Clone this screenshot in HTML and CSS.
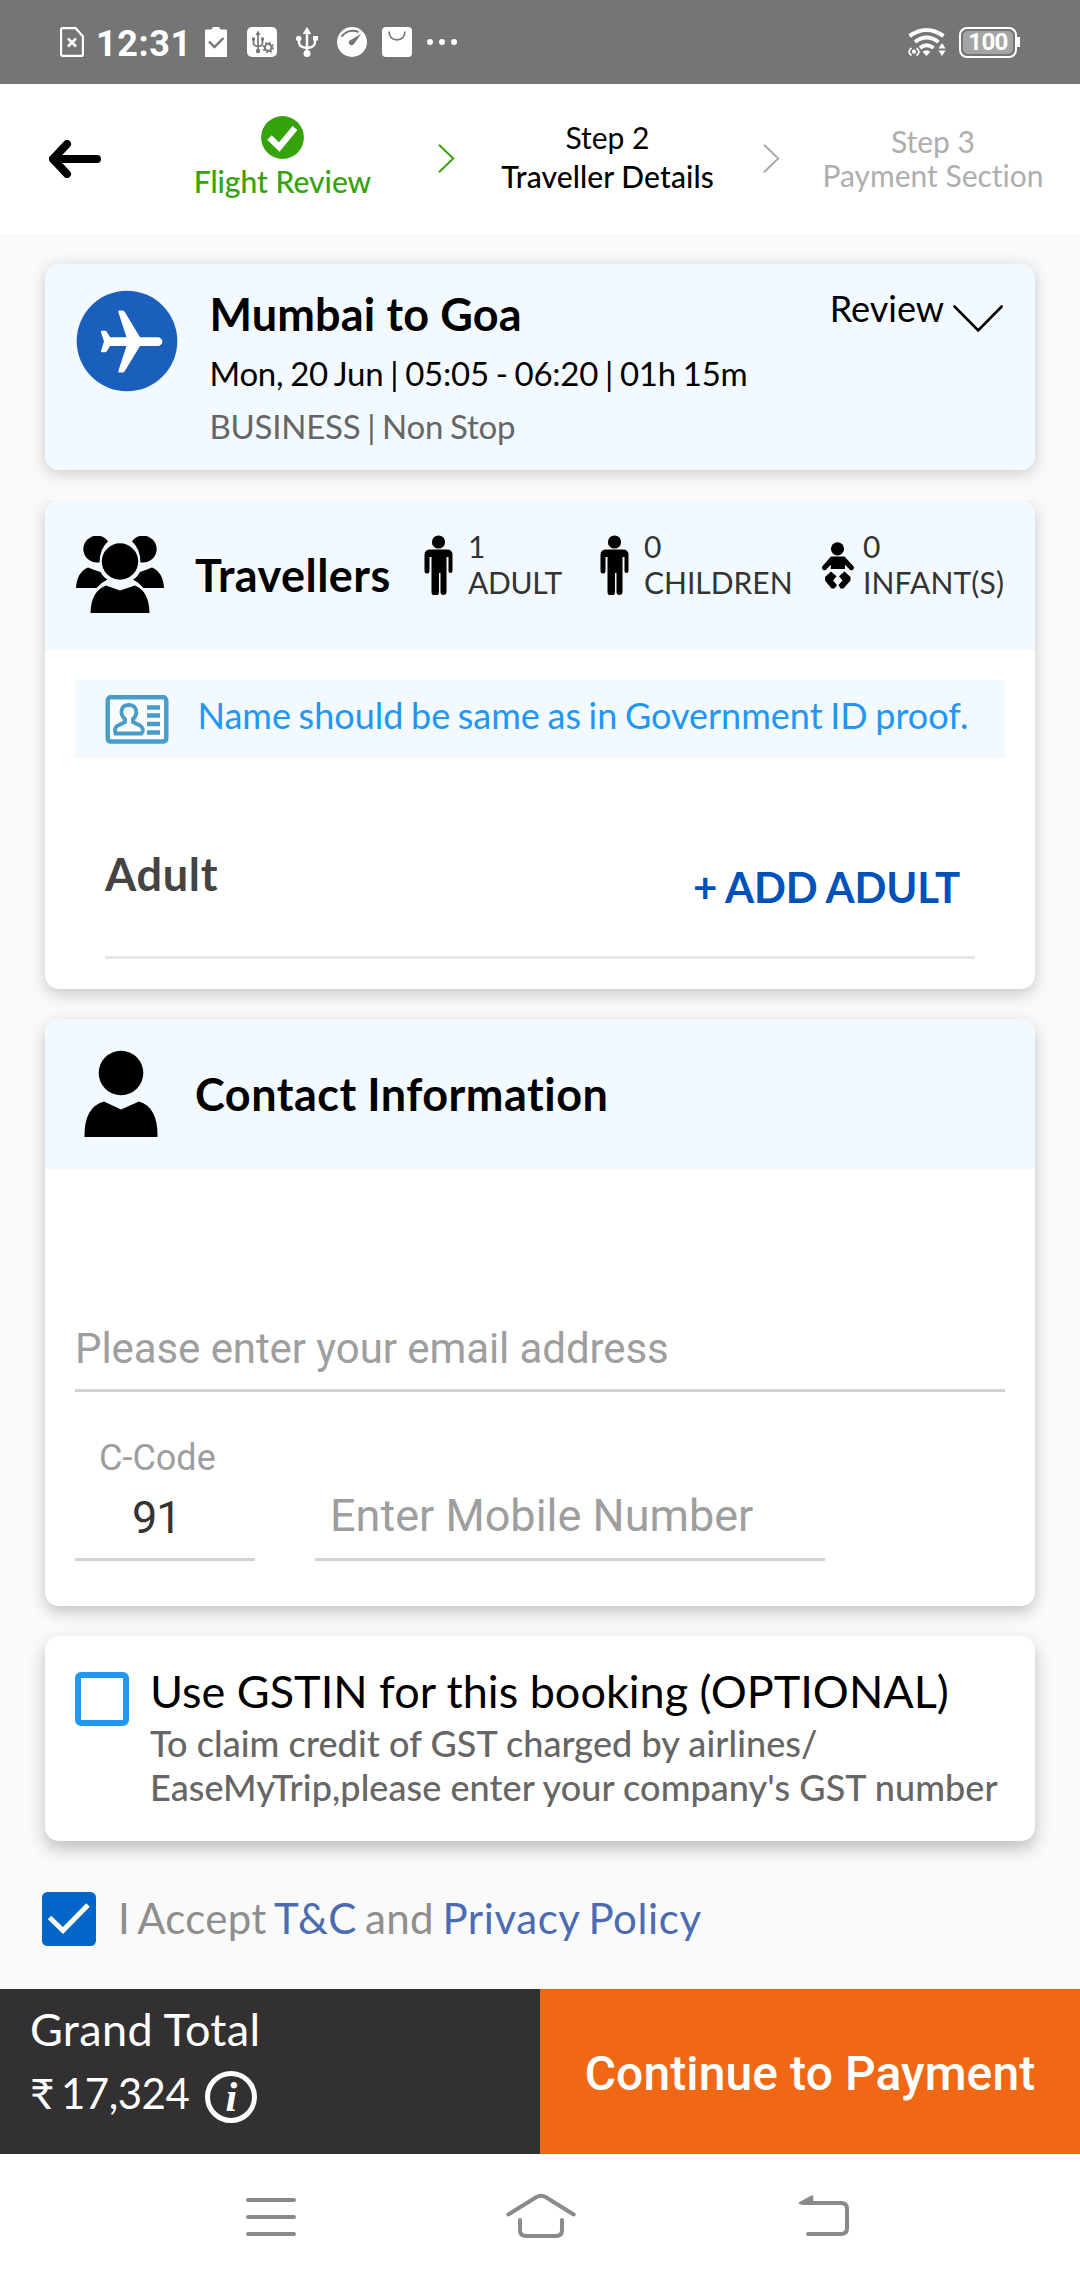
FILE: index.html
```html
<!DOCTYPE html>
<html lang="en">
<head>
<meta charset="utf-8">
<title>Traveller Details</title>
<link rel="stylesheet" href="styles.css">
</head>
<body>
<div class="status">
  <svg class="st-sim" width="24" height="30" viewBox="0 0 24 30" fill="none" stroke="#fff"><path d="M3 1H15.500L23 9.500V27a2 2 0 0 1-2 2H3a2 2 0 0 1-2-2V3a2 2 0 0 1 2-2Z" stroke-width="2.300"/><path d="M8 11.500l8 8M16 11.500l-8 8" stroke-width="2.600"/></svg>
  <span class="clock">12:31</span>
  <svg class="st-clip" width="22" height="30" viewBox="0 0 22 30"><path d="M1 2.500H6.500L8 0H14L15.500 2.500H21a1 1 0 0 1 1 1V30H0V3.500a1 1 0 0 1 1-1Z" fill="#fff"/><path d="M4 14.500l5.500 5.500L18.500 11" fill="none" stroke="#757575" stroke-width="2.400"/></svg>
  <svg class="st-debug" width="30" height="30" viewBox="0 0 30 30"><rect width="30" height="30" rx="5" fill="#fff"/><g fill="none" stroke="#757575" stroke-width="1.700"><path d="M11 6v18M6.500 12v4q0 3 4.500 3.500q4.500-.5 4.500-3.500v-4"/><circle cx="21.200" cy="20.500" r="3.400" stroke-width="2"/><circle cx="21.200" cy="20.500" r="4.900" stroke-dasharray="1.900 1.950" stroke-width="1.700"/></g><path d="M11 3.500l2.500 4.500h-5zM5 10.500h3v3h-3zM14 10.500h3v3h-3z" fill="#757575"/><circle cx="11" cy="24" r="2.200" fill="#757575"/></svg>
  <svg class="st-usb" width="22" height="30" viewBox="0 0 22 30"><path d="M11 5v20M3 11v4q0 5.500 8 6q8-.5 8-6v-4" fill="none" stroke="#fff" stroke-width="2.400"/><path d="M11 0l4.300 7H6.700zM17 9h5v4.500h-5z" fill="#fff"/><circle cx="2.700" cy="11.500" r="2.700" fill="#fff"/><circle cx="11" cy="26.500" r="3.500" fill="#fff"/></svg>
  <svg class="st-gauge" width="30" height="30" viewBox="0 0 30 30"><circle cx="15" cy="15" r="15" fill="#fff"/><path d="M4.500 9.500Q12 1 21.500 5" fill="none" stroke="#757575" stroke-width="2"/><path d="M24 7L17 17a2.800 2.800 0 1 1-4.600-3.200Z" fill="#757575"/></svg>
  <svg class="st-bag" width="30" height="30" viewBox="0 0 30 30"><rect width="30" height="30" rx="4" fill="#fff"/><path d="M7 4.500q.5 8.300 8 8.300t8-8.300" fill="none" stroke="#757575" stroke-width="1.700"/></svg>
  <svg class="st-more" width="32" height="30" viewBox="0 0 32 30" fill="#fff"><circle cx="4" cy="15" r="3"/><circle cx="16" cy="15" r="3"/><circle cx="28" cy="15" r="3"/></svg>
  <svg class="st-wifi" width="38" height="30" viewBox="0 0 38 30" fill="none" stroke="#fff"><g stroke-width="4"><path d="M1.500 9Q18.500-3 35.500 9"/><path d="M7 15Q18.500 6 30.500 15"/><path d="M12 21Q18.500 15.500 25.500 21"/></g><path d="M18.500 29l-4-4.300q4-3 8 0z" fill="#fff" stroke="none"/><path d="M3.500 21q-5 3.800 0 7.500M8.500 21q5 3.800 0 7.500" stroke-width="1.700"/><circle cx="6" cy="24.700" r="2.100" fill="#fff" stroke="none"/><path d="M34 16l3.600 5.600h-7.200zM34 29l3.600-5.600h-7.200z" fill="#fff" stroke="none"/></svg>
  <span class="battery"><span class="charge">100</span></span>
</div>

<header class="topbar">
  <svg class="back" width="52" height="38" viewBox="0 0 52 38" fill="none" stroke="#000" stroke-width="8" stroke-linecap="round" stroke-linejoin="round"><path d="M4 19H48M18 4L4 19L18 34"/></svg>
  <div class="step done">
    <svg width="43" height="43" viewBox="0 0 43 43"><circle cx="21.500" cy="21.500" r="21.400" fill="#36a30d"/><path d="M8.500 21.500L18.200 31L34 12" fill="none" stroke="#fff" stroke-width="6.300"/></svg>
    <span>Flight Review</span>
  </div>
  <svg class="chev" width="17" height="29" viewBox="0 0 17 29" fill="none" stroke="#36a30d" stroke-width="2"><path d="M1 .8L15.200 14.500L1 28.200"/></svg>
  <div class="step current"><span>Step 2</span><span class="med">Traveller Details</span></div>
  <svg class="chev" width="17" height="29" viewBox="0 0 17 29" fill="none" stroke="#aaa" stroke-width="2"><path d="M1 .8L15.200 14.500L1 28.200"/></svg>
  <div class="step next"><span>Step 3</span><span>Payment Section</span></div>
</header>

<main>
  <section class="card trip">
    <svg class="plane" width="102" height="102" viewBox="0 0 102 102"><circle cx="51" cy="51" r="50.300" fill="#1b5fbd"/><path fill="#fff" d="M83 47.200H64L48.800 22q-.8-1.500-2.300-1.500h-3.200q-1.500 0-1 1.600L50.500 47.200H34l-3.200-5.500q-.6-1-1.700-1H26q-1.500 0-1 1.500l3 9.300l-3 9.300q-.5 1.500 1 1.500h3.100q1.100 0 1.700-1l3.200-5.300H50.500L42.300 81q-.5 1.600 1 1.600h3.200q1.500 0 2.300-1.500L64 56h19q3.400-1.700 3.400-4.400T83 47.200Z"/></svg>
    <div class="trip-info">
      <h1>Mumbai to Goa</h1>
      <p class="when">Mon, 20 Jun | 05:05 - 06:20 | 01h 15m</p>
      <p class="cabin">BUSINESS | Non Stop</p>
    </div>
    <div class="review">Review
      <svg width="52" height="30" viewBox="0 0 52 30" fill="none" stroke="#000" stroke-width="2.600" stroke-linecap="round"><path d="M2.500 2.500L26.200 26.500L49.700 2.500"/></svg>
    </div>
  </section>

  <section class="card travellers">
    <div class="card-head">
      <svg class="group" width="88" height="77" viewBox="0 0 88 77"><path d="M22.500 26.500A13.500 13.500 0 1 1 32 5.500Q24 12 23.500 26.500ZM65.500 26.500A13.500 13.500 0 1 0 56 5.500Q64 12 64.500 26.500ZM0 52Q1 36 12 31.500Q18 34 24.500 36Q28 42 31.500 43.500Q25 46.500 20.500 52ZM88 52Q87 36 76 31.500Q70 34 64 36Q60.500 42 57 43.500Q63 46.500 67.500 52ZM14.500 77Q15 55 30 49.500L44 54.500L59 49.500Q73 55 73.500 77Z"/><circle cx="44" cy="25.500" r="18.200"/></svg>
      <h2>Travellers</h2>
      <div class="pax adult">
        <svg width="29" height="60" viewBox="0 0 29 60"><circle cx="14.500" cy="7" r="6.600"/><path d="M6 14.500H23Q28.500 14.500 28.500 20V36a2 2 0 0 1-4 0V22H22.500V57a3 3 0 0 1-6 0V38h-1.500V57a3.700 3.700 0 0 1-7.500 0V22H5.500V36a2.500 2.500 0 0 1-5 0V20Q.5 14.500 6 14.500Z"/></svg>
        <p>1<br>ADULT</p>
      </div>
      <div class="pax children">
        <svg width="29" height="60" viewBox="0 0 29 60"><circle cx="14.500" cy="7" r="6.600"/><path d="M6 14.500H23Q28.500 14.500 28.500 20V36a2 2 0 0 1-4 0V22H22.500V57a3 3 0 0 1-6 0V38h-1.500V57a3.700 3.700 0 0 1-7.500 0V22H5.500V36a2.500 2.500 0 0 1-5 0V20Q.5 14.500 6 14.500Z"/></svg>
        <p>0<br>CHILDREN</p>
      </div>
      <div class="pax infants">
        <svg width="34" height="47" viewBox="0 0 34 47"><circle cx="16.500" cy="6.800" r="6.600"/><path d="M10 14.500h13.500l9 9.700a2.600 2.600 0 0 1-3.600 3.600L24 22.800V27H9.800v-4.200L5 27.800a2.600 2.600 0 0 1-3.600-3.600ZM10 29.500l5.500 4.800l-3.500 4.200l4 4.500l-2.500 3.500h-3L4 38.500V35ZM23.500 29.500L18 34.300l3.500 4.200l-4 4.500l2 3.500h3L29.500 38.500V35Z"/></svg>
        <p>0<br>INFANT(S)</p>
      </div>
    </div>
    <div class="notice">
      <svg width="64" height="49" viewBox="0 0 64 49" fill="none" stroke="#4a9cc8"><path d="M5 2.200H59Q61.300 3.500 61.300 6V43Q61.300 46 59 46.500H5Q2.700 46 2.700 43V6Q2.700 3.500 5 2.200Z" stroke-width="4.400" fill="#f8fcff"/><path d="M24 10q-8 0-7.500 8q.2 3.500 3.500 6v3L12 31q-3 2.500-1.500 7.500h26Q40 34 35 30.500L28 27v-3q3-2.500 3.300-6Q31.500 10 24 10Z" stroke-width="3.800"/><path d="M42 12.500H55M42 20.500H55M42 29H55M42 37.500H55" stroke-width="4.400"/></svg>
      <p>Name should be same as in Government ID proof.</p>
    </div>
    <div class="adult-row">
      <h3>Adult</h3>
      <button class="add">+ ADD ADULT</button>
    </div>
  </section>

  <section class="card contact">
    <div class="card-head">
      <svg class="person" width="74" height="88" viewBox="0 0 74 88"><circle cx="37" cy="23" r="22.300"/><path d="M.5 87Q0 57 20 51.500L37 59.500L55 51.500Q74 57 73.500 87Z"/></svg>
      <h2>Contact Information</h2>
    </div>
    <div class="field email">Please enter your email address</div>
    <div class="phone">
      <div class="field code"><small>C-Code</small><span>91</span></div>
      <div class="field mobile">Enter Mobile Number</div>
    </div>
  </section>

  <section class="card gst">
    <span class="box"></span>
    <div>
      <h4>Use GSTIN for this booking (OPTIONAL)</h4>
      <p>To claim credit of GST charged by airlines/<br>EaseMyTrip,please enter your company's GST number</p>
    </div>
  </section>

  <div class="accept">
    <svg width="54" height="54" viewBox="0 0 54 54"><rect width="54" height="54" rx="5.500" fill="#0266c8"/><path d="M7.500 25.500L21 38.500L46 13" fill="none" stroke="#fff" stroke-width="5"/></svg>
    <p>I Accept <a>T&amp;C</a> and <a class="privacy">Privacy Policy</a></p>
  </div>
</main>

<footer class="paybar">
  <div class="total">
    <p class="label">Grand Total</p>
    <p class="amount"><span class="rupee">₹</span><span>17,324</span>
      <svg width="54" height="54" viewBox="0 0 54 54"><circle cx="27" cy="27" r="23.500" fill="none" stroke="#fff" stroke-width="5"/><text class="info-i" x="27" y="41" text-anchor="middle">i</text></svg>
    </p>
  </div>
  <button class="pay">Continue to Payment</button>
</footer>

<nav class="sysnav">
  <svg class="menu" width="50" height="44" viewBox="0 0 50 44" fill="none" stroke="#8a8a8a" stroke-width="4" stroke-linecap="round"><path d="M2 5H48M2 22H48M2 39H48"/></svg>
  <svg class="home" width="70" height="46" viewBox="0 0 70 46" fill="none" stroke="#8a8a8a" stroke-width="4" stroke-linecap="round"><path d="M2.300 21.500L30.500 4Q35 1.500 39.500 4L67.700 21.500M14 27V37Q14 43 20 43H50Q56 43 56 37V27"/></svg>
  <svg class="return" width="52" height="44" viewBox="0 0 52 44" fill="none" stroke="#8a8a8a" stroke-width="4" stroke-linecap="round"><path d="M5 9H43Q49 9 49 15V34Q49 40 43 40H10"/><path d="M2 9L14 2.500V9Z" stroke-width="2.500" stroke-linejoin="round" fill="#8a8a8a"/></svg>
</nav>
</body>
</html>
```
FILE: styles.css
```css
* { box-sizing: border-box; margin: 0; padding: 0; }
body { width: 1080px; height: 2280px; display: flex; flex-direction: column; background: #fafafa; font-family: Lato, "Noto Sans", sans-serif; font-weight: 400; font-variant-ligatures: none; color: #000; white-space: nowrap; overflow: hidden; }
svg { display: block; flex: none; }
button { border: 0; background: none; font: inherit; }
p, h1, h2, h3, h4 { font-size: inherit; }

/* system status bar */
.status { height: 84px; background: #757575; color: #fff; display: flex; align-items: center; font-family: Roboto, sans-serif; padding-left: 60px; }
.clock { font-size: 36px; font-weight: 700; letter-spacing: .6px; margin-left: 12px; width: 109px; line-height: 42px; padding-top: 3px; }
.st-debug { margin-left: 20px; }
.st-usb { margin-left: 19px; }
.st-gauge { margin-left: 19px; }
.st-bag { margin-left: 15px; }
.st-more { margin-left: 14px; }
.st-wifi { margin-left: 450px; }
.battery { position: relative; margin-left: 13px; width: 58px; height: 31px; border: 2px solid #fff; border-radius: 8px; padding: 2px; }
.battery::after { content: ""; position: absolute; left: 56px; top: 8px; width: 3px; height: 10px; background: #fff; }
.charge { display: block; height: 23px; border-radius: 5px; background: #a5a5a5; font-size: 24px; font-weight: 700; line-height: 23px; text-align: center; letter-spacing: -.6px; }

/* booking steps */
.topbar { height: 150px; background: #fff; display: grid; grid-template-columns: 150px 266px 61px 261px 66px 258px; }
.back { margin: 56px 0 0 49px; }
.chev { justify-self: center; margin-top: 60px; }
.step { display: flex; flex-direction: column; align-items: center; font-size: 30px; }
.done { color: #36a30d; padding: 32px 1px 0 0; }
.done span { font-weight: 500; line-height: 36px; margin-top: 4px; }
.current { line-height: 39px; padding-top: 34px; }
.med { font-weight: 500; letter-spacing: .1px; }
.next { line-height: 34px; padding-top: 40px; color: #aeaeae; }

/* cards */
main { height: 1755px; padding: 30px 45px 0; display: flex; flex-direction: column; }
.card { border-radius: 14px; background: #fff; margin-bottom: 30px; flex: none; }
.card-head { height: 150px; background: #f2f9ff; border-radius: 14px 14px 0 0; display: flex; }
h2 { font-size: 45px; font-weight: 700; line-height: 54px; }

.trip { height: 206px; background: #f2f9ff; display: flex; box-shadow: 0 3px 16px rgba(0,0,0,.2); }
.plane { margin: 26px 0 0 31px; }
.trip-info { flex: 1; padding: 23px 0 0 31.5px; }
h1 { font-size: 45px; line-height: 54px; font-weight: 700; letter-spacing: .15px; }
.when, .cabin { font-size: 33px; line-height: 40px; margin-top: 13px; letter-spacing: -.25px; word-spacing: -1.3px; }
.when { margin-top: 12px; }
.cabin { color: #666; }
.review { display: flex; font-size: 36px; line-height: 44px; padding: 22px 31px 0 0; gap: 8px; }
.review svg { margin-top: 18px; }

.travellers { height: 489px; box-shadow: 0 5px 16px rgba(0,0,0,.2); clip-path: inset(0 -40px -40px -40px); }
.group { margin: 36px 0 0 31px; }
.travellers h2 { margin: 48px 0 0 31px; width: 229px; letter-spacing: .45px; }
.pax { display: flex; font-size: 30px; line-height: 36px; color: #333; padding-top: 28px; }
.pax svg { fill: #000; margin: 7px 15px 0 0; }
.adult { width: 176px; letter-spacing: -.3px; }
.children { width: 221px; }
.infants svg { margin: 14px 8px 0 0; }
.infants { letter-spacing: .15px; }

.notice { margin: 30px 30px 0; height: 78px; background: #f2f9ff; display: flex; padding-left: 29.5px; color: #2196f3; font-size: 36px; word-spacing: -1.6px; line-height: 44px; }
.notice svg { margin-top: 15px; }
.notice p { margin: 13px 0 0 29px; }
.adult-row { margin: 75px 60px 0; height: 126px; border-bottom: 3px solid #e4e8eb; display: flex; justify-content: space-between; }
h3 { font-size: 45px; line-height: 54px; font-weight: 700; color: #444; padding-top: 14px; letter-spacing: .7px; }
.add { height: 54px; line-height: 54px; margin: 27px 15px 0 0; font-size: 42px; font-weight: 700; color: #0052b8; letter-spacing: -.2px; word-spacing: -.7px; }

.contact { height: 587px; box-shadow: 0 6px 16px rgba(0,0,0,.22); font-family: Roboto, sans-serif; }
.person { margin: 31px 0 0 39px; }
.contact h2 { font-family: Lato, sans-serif; margin: 48px 0 0 37px; letter-spacing: .5px; word-spacing: -1px; }
.field { border-bottom: 3px solid #d3d3d3; color: #9e9e9e; }
.email { margin: 150px 30px 0; height: 73px; font-size: 42px; line-height: 60px; letter-spacing: -.08px; }
.phone { display: flex; margin: 36px 30px 0; gap: 60px; }
.code { width: 180px; height: 133px; display: flex; flex-direction: column; align-items: flex-start; }
.code small { font-size: 36px; line-height: 42px; margin: 9px 0 0 24px; }
.code span { font-size: 45px; line-height: 54px; color: #333; margin: 12px 0 0 57px; letter-spacing: -1px; }
.mobile { width: 510px; height: 133px; padding: 61px 0 0 15px; font-size: 45px; line-height: 54px; }

.gst { height: 205px; display: flex; box-shadow: 0 8px 17px rgba(0,0,0,.24); }
.box { width: 54px; height: 54px; border: 6px solid #2196f3; border-radius: 6px; margin: 36px 21px 0 30px; }
h4 { font-size: 45px; font-weight: 400; line-height: 54px; margin-top: 28px; }
.gst p { font-size: 36px; line-height: 44px; margin-top: 3px; color: #666; font-weight: 500; letter-spacing: .07px; }

.accept { display: flex; margin: 21px 0 0 -3px; gap: 22px; color: #8e8e8e; font-size: 42px; line-height: 52px; letter-spacing: .3px; word-spacing: -2.5px; }
.accept a { color: #4b6bb2; }
.privacy { letter-spacing: .6px; }

/* total and payment */
.paybar { height: 165px; display: grid; grid-template-columns: 1fr 1fr; flex: none; color: #fff; }
.total { background: #333031; padding: 13px 0 0 30px; }
.label { font-size: 45px; line-height: 54px; letter-spacing: .35px; }
.amount { display: flex; font-size: 42px; line-height: 50px; margin-top: 12px; letter-spacing: -.5px; }
.rupee { width: 31px; }
.amount svg { margin: 2px 0 0 15px; }
.info-i { font: italic 700 42px "Liberation Serif", serif; fill: #fff; }
.pay { background: #f06815; color: #fff; font-family: Roboto, sans-serif; font-size: 48px; font-weight: 500; text-align: center; letter-spacing: .1px; padding: 4px 0 0; }

/* system navigation */
.sysnav { height: 126px; background: #fff; display: flex; flex: none; }
.menu { margin: 41px 0 0 246px; }
.home { margin: 39px 0 0 210px; }
.return { margin: 40px 0 0 222px; }
```
